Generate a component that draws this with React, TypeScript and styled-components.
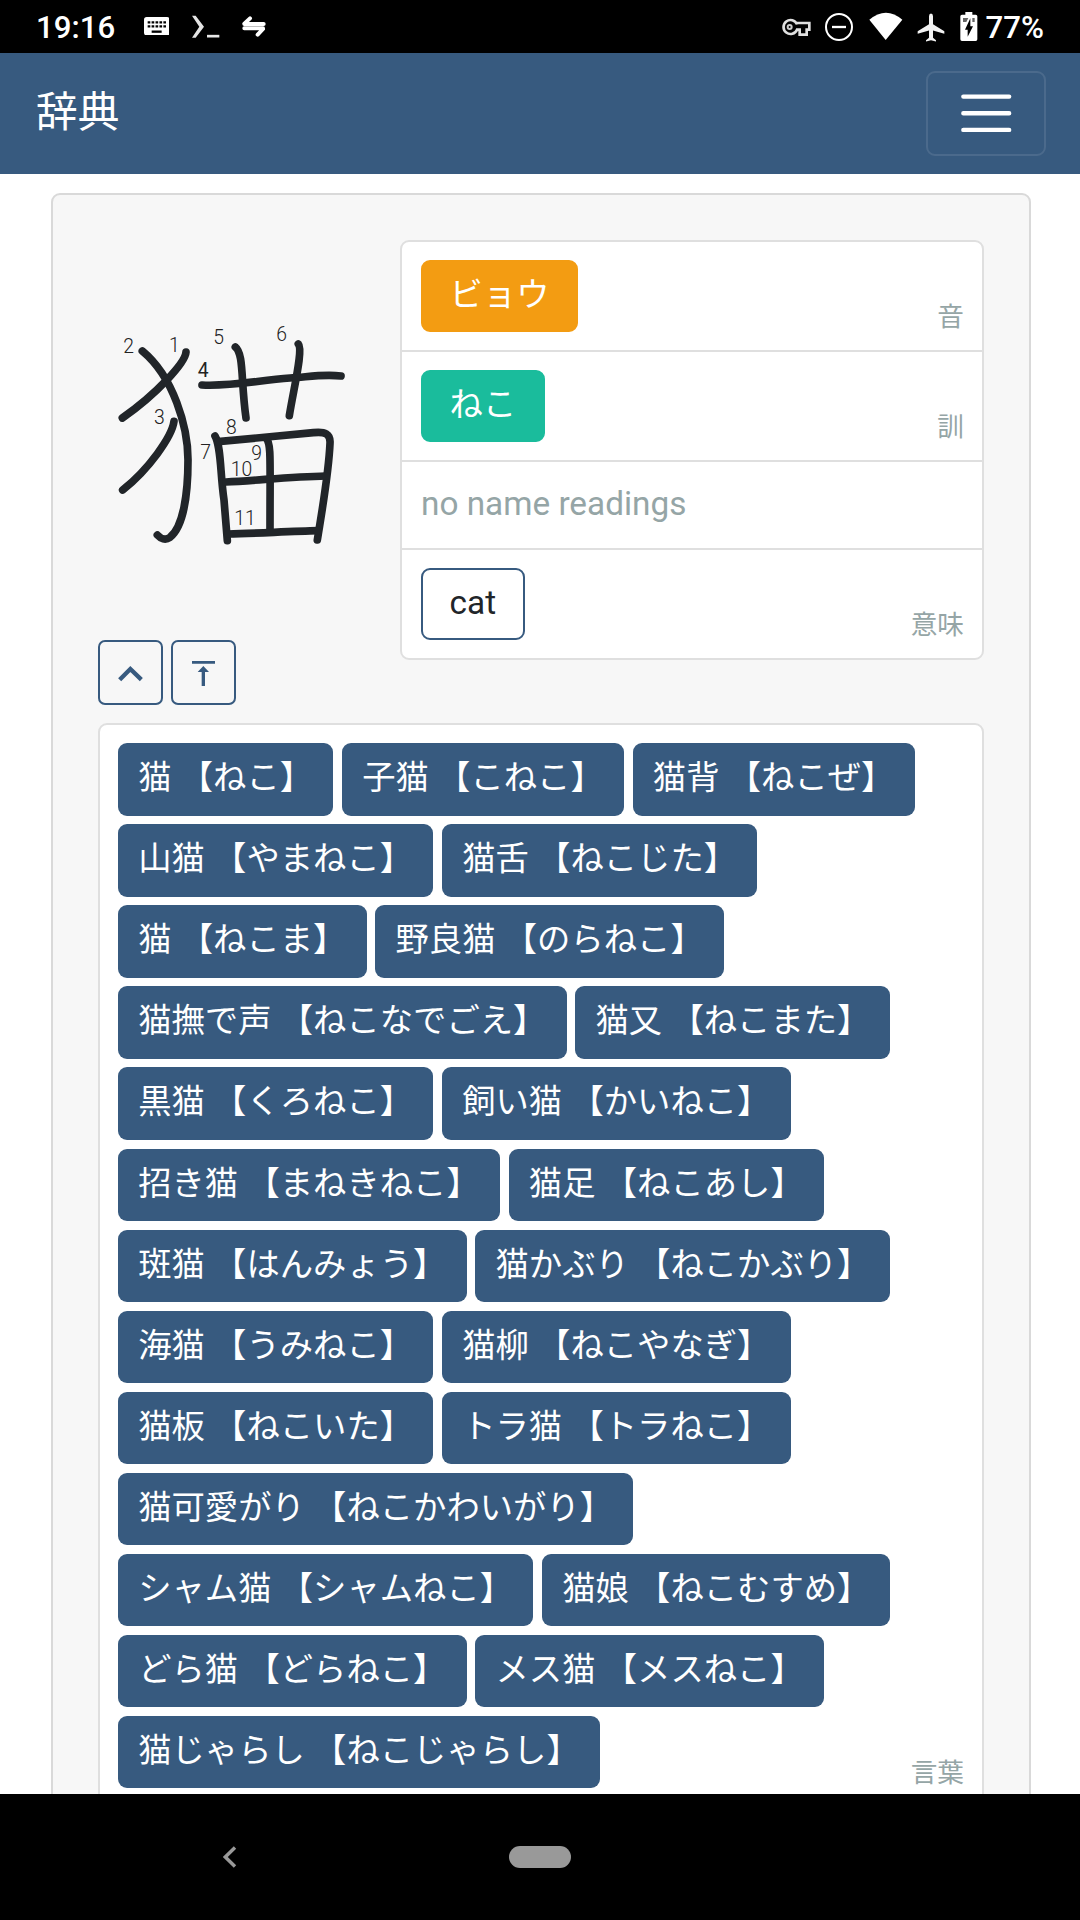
import React from "react";
import styled, { createGlobalStyle } from "styled-components";

const sans = `Roboto, "Noto Sans CJK JP", sans-serif`;
const blue = "#375a7f";

const GlobalStyle = createGlobalStyle`
  *, *::before, *::after { box-sizing: border-box; }
  body { margin: 0; background: #fff; font-family: ${sans}; }
`;

const Screen = styled.div`
  width: 1080px;
  height: 1920px;
  display: flex;
  flex-direction: column;
  overflow: hidden;
  font-size: 33.333px;
  line-height: 50px;
  color: #212529;
`;

const StatusBar = styled.header`
  flex: none;
  height: 53px;
  padding: 0 36px 0 36px;
  display: flex;
  justify-content: space-between;
  background: #000;
  color: #fff;
`;

const StatusGroup = styled.div`
  display: flex;
  align-items: flex-start;
`;

const StatusText = styled.span<{ $left?: number }>`
  margin-left: ${(p) => p.$left ?? 0}px;
  font-size: 31.2px;
  font-weight: 500;
  line-height: 55px;
`;

const Glyph = styled.svg<{ $left: number; $top: number }>`
  display: block;
  flex: none;
  margin-left: ${(p) => p.$left}px;
  margin-top: ${(p) => p.$top}px;
`;

const Navbar = styled.nav`
  flex: none;
  height: 120.6px;
  padding: 0 34px 0 36px;
  display: flex;
  align-items: center;
  justify-content: space-between;
  background: ${blue};
  color: #fff;
`;

const Brand = styled.span`
  font-size: 41.667px;
  line-height: 62px;
`;

const Toggler = styled.button`
  width: 120px;
  height: 85px;
  padding: 0;
  display: flex;
  align-items: center;
  justify-content: center;
  border: 2px solid rgba(255, 255, 255, 0.1);
  border-radius: 9px;
  background: transparent;
`;

const Main = styled.main`
  flex: 1;
  min-height: 0;
  overflow: hidden;
  padding: 19.4px 49px 0 51px;
`;

const Card = styled.section`
  height: 1700px;
  padding: 45px;
  border: 2px solid #d9d9d9;
  border-radius: 9px;
  background: #f7f7f7;
`;

const Summary = styled.div`
  display: flex;
  height: 483.15px;
`;

const Diagram = styled.div`
  width: 302px;
  padding-top: 60px;
  display: flex;
  flex-direction: column;
`;

const KanjiSvg = styled.svg`
  display: block;
`;

const Actions = styled.div`
  display: flex;
  gap: 8px;
  margin-top: 60px;
`;

const IconButton = styled.button`
  width: 65px;
  height: 65px;
  padding: 0;
  display: flex;
  align-items: center;
  justify-content: center;
  border: 2px solid ${blue};
  border-radius: 7px;
  background: transparent;
  color: ${blue};
`;

const Panel = styled.div`
  border: 2px solid #dfdfdf;
  border-radius: 9px;
  background: #fff;
`;

const Row = styled.div`
  padding: 18px;
  display: grid;
  & + & {
    border-top: 2px solid #dfdfdf;
  }
  & > * {
    grid-area: 1 / 1;
  }
`;

const Readings = styled(Panel)`
  width: 584px;
  height: 420px;
  & > ${Row} {
    padding-left: 19px;
  }
`;

const Tags = styled.div`
  display: flex;
  flex-wrap: wrap;
  align-content: flex-start;
  gap: 8.7px 8.8px;
`;

const Tag = styled.span<{ $bg: string; $fg?: string; $line?: string }>`
  height: 72px;
  padding: 0 26.8px 0 26.6px;
  border: 2px solid ${(p) => p.$line ?? p.$bg};
  border-radius: 9px;
  background: ${(p) => p.$bg};
  color: ${(p) => p.$fg ?? "#fff"};
  line-height: 66px;
  white-space: nowrap;
`;

const Word = styled.span`
  height: 72.4px;
  padding: 0 20.1px 0 20.2px;
  border-radius: 9px;
  background: ${blue};
  color: #fff;
  line-height: 70px;
  white-space: nowrap;
`;

const Muted = styled.span`
  margin: -1px 0 1px;
  color: #95a5a6;
`;

const Label = styled.small`
  place-self: end;
  color: #95a5a6;
  font-size: 26.667px;
  line-height: 30px;
`;

const SystemNav = styled.footer`
  flex: none;
  height: 126px;
  padding: 52px 0 0 223px;
  display: flex;
  background: #000;
`;

const HomePill = styled.span`
  width: 62px;
  height: 22px;
  margin-left: 272px;
  border-radius: 11px;
  background: #999;
`;

const words = [
  "猫 【ねこ】", "子猫 【こねこ】", "猫背 【ねこぜ】",
  "山猫 【やまねこ】", "猫舌 【ねこじた】",
  "猫 【ねこま】", "野良猫 【のらねこ】",
  "猫撫で声 【ねこなでごえ】", "猫又 【ねこまた】",
  "黒猫 【くろねこ】", "飼い猫 【かいねこ】",
  "招き猫 【まねきねこ】", "猫足 【ねこあし】",
  "斑猫 【はんみょう】", "猫かぶり 【ねこかぶり】",
  "海猫 【うみねこ】", "猫柳 【ねこやなぎ】",
  "猫板 【ねこいた】", "トラ猫 【トラねこ】",
  "猫可愛がり 【ねこかわいがり】",
  "シャム猫 【シャムねこ】", "猫娘 【ねこむすめ】",
  "どら猫 【どらねこ】", "メス猫 【メスねこ】",
  "猫じゃらし 【ねこじゃらし】",
];

const strokes = [
  "M288 156 C286 188 200 282 97 354",
  "M157 153 C250 230 294 380 294 480 C294 580 280 680 240 712 C226 722 212 716 202 705",
  "M252 364 C246 410 176 508 98 570",
  "M336 255 C420 260 500 242 600 234 C660 230 700 222 753 228",
  "M436 141 C462 162 452 240 468 354",
  "M625 132 C640 150 612 260 598 347",
  "M375 408 C394 440 390 520 402 600 L412 722",
  "M384 425 L670 398 C706 394 722 402 720 430 C716 520 698 620 682 720",
  "M528 414 C544 430 540 470 540 690",
  "M408 546 C500 542 600 530 708 528",
  "M414 702 C500 700 600 694 684 692",
];

const numbers: [string, number, number][] = [
  ["1", 237, 156], ["2", 100, 159], ["3", 192, 373], ["4", 323, 230],
  ["5", 370, 133], ["6", 559, 123], ["7", 331, 478], ["8", 408, 403],
  ["9", 484, 481], ["10", 422, 528], ["11", 433, 675],
];

function Kanji() {
  return (
    <KanjiSvg width="272" height="280" viewBox="24 0 816 840">
      <g fill="none" stroke="#212529" strokeWidth="23" strokeLinecap="round" strokeLinejoin="round">
        {strokes.map((d) => <path key={d} d={d} />)}
      </g>
      <g fill="#222" fontFamily="Roboto, sans-serif" fontWeight="300" fontSize="58">
        {numbers.map(([n, x, y]) => (
          <text key={n} x={x} y={y} fontWeight={n === "4" ? 400 : undefined}>{n}</text>
        ))}
      </g>
    </KanjiSvg>
  );
}

export default function App() {
  return (
    <Screen>
      <GlobalStyle />
      <StatusBar>
        <StatusGroup>
          <StatusText>19:16</StatusText>
          <Glyph $left={28.5} $top={17} width="25.67" height="18.33" viewBox="431 51 77 55">
            <rect x="431" y="51" width="77" height="55" rx="8" fill="#fff" />
            <path d="M442 67h55M442 79h55" stroke="#000" strokeWidth="7" strokeDasharray="8 3.8" />
            <path d="M454 95h30" stroke="#000" strokeWidth="7" />
          </Glyph>
          <Glyph $left={21.5} $top={14.5} width="29" height="24" viewBox="573 43.5 87 72">
            <path d="M576 46h11l25 33l-25 33h-11l22-33z" fill="#e4e4e4" />
            <path d="M621 107h37" stroke="#e8e8e8" strokeWidth="8" />
          </Glyph>
          <Glyph $left={22} $top={16} width="24" height="21" viewBox="726 48 72 63">
            <path d="M733 72H791M750 55L733 71M789 85H733M789 87L773 104" fill="none" stroke="#fff" strokeWidth="12" strokeLinecap="round" />
          </Glyph>
        </StatusGroup>
        <StatusGroup>
          <Glyph $left={0} $top={18} width="30" height="19" viewBox="120 54 90 57">
            <path d="M168 73a21 21 0 1 0 0 16h8v15h21V89h8V69h-37z" fill="none" stroke="#e0e0e0" strokeWidth="8" />
            <circle cx="146" cy="81" r="6" fill="none" stroke="#ccc" strokeWidth="6" />
          </Glyph>
          <Glyph $left={13} $top={12} width="30" height="30" viewBox="249 36 90 90">
            <circle cx="294" cy="81" r="39" fill="none" stroke="#fff" strokeWidth="6" />
            <path d="M273 81h42" stroke="#fff" strokeWidth="7" />
          </Glyph>
          <Glyph $left={15} $top={12} width="34" height="29" viewBox="383 36 102 87">
            <path d="M384 59q50-42 99 0l-50 61z" fill="#fff" />
          </Glyph>
          <Glyph $left={14} $top={12.5} width="28" height="29" viewBox="526 37.5 84 87">
            <path d="M568 39q-6 1-6 8v24l-34 21v8l34-10v22l-9 7v4l15-4l15 4v-4l-9-7V90l34 10v-8L574 71V47q0-7-6-8z" fill="#f2f2f2" />
          </Glyph>
          <Glyph $left={15} $top={12} width="18" height="29" viewBox="656 36 54 87">
            <path d="M672 36h21v8h10q5 0 5 5v69q0 5-5 5h-41q-5 0-5-5V49q0-5 5-5h10z" fill="#fff" />
            <path d="M665 54h16l-6 12h-10zM693 54h7v12h-7z" fill="#666" />
            <path d="M687 55v24h8l-16 31V89h-8z" fill="#000" />
          </Glyph>
          <StatusText $left={8}>77%</StatusText>
        </StatusGroup>
      </StatusBar>

      <Navbar>
        <Brand>辞典</Brand>
        <Toggler aria-label="menu">
          <svg width="62.5" height="62.5" viewBox="0 0 30 30">
            <path d="M4 7h22M4 15h22M4 23h22" stroke="#fff" strokeWidth="2.1" strokeLinecap="round" />
          </svg>
        </Toggler>
      </Navbar>

      <Main>
        <Card>
          <Summary>
            <Diagram>
              <Kanji />
              <Actions>
                <IconButton aria-label="up">
                  <svg width="61" height="61" viewBox="180 66 183 183">
                    <path d="M239 179L271 147L304 179" fill="none" stroke="currentColor" strokeWidth="13" />
                  </svg>
                </IconButton>
                <IconButton aria-label="top">
                  <svg width="61" height="61" viewBox="399 66 183 183">
                    <path d="M456 123h69v8h-69zM490 138l17 18h-12v42h-10v-42h-12z" fill="currentColor" />
                  </svg>
                </IconButton>
              </Actions>
            </Diagram>
            <Readings>
              <Row>
                <Tags><Tag $bg="#f39c12">ビョウ</Tag></Tags>
                <Label>音</Label>
              </Row>
              <Row>
                <Tags><Tag $bg="#1abc9c">ねこ</Tag></Tags>
                <Label>訓</Label>
              </Row>
              <Row><Muted>no name readings</Muted></Row>
              <Row>
                <Tags><Tag $bg="#fff" $fg="#212529" $line={blue}>cat</Tag></Tags>
                <Label>意味</Label>
              </Row>
            </Readings>
          </Summary>
          <Panel>
            <Row>
              <Tags>
                {words.map((w) => <Word key={w}>{w}</Word>)}
              </Tags>
              <Label>言葉</Label>
            </Row>
          </Panel>
        </Card>
      </Main>

      <SystemNav>
        <svg width="14" height="22" viewBox="0 0 14 22">
          <path d="M12 1.5L2.3 11L12 20.5" fill="none" stroke="#999" strokeWidth="3.4" />
        </svg>
        <HomePill />
      </SystemNav>
    </Screen>
  );
}
